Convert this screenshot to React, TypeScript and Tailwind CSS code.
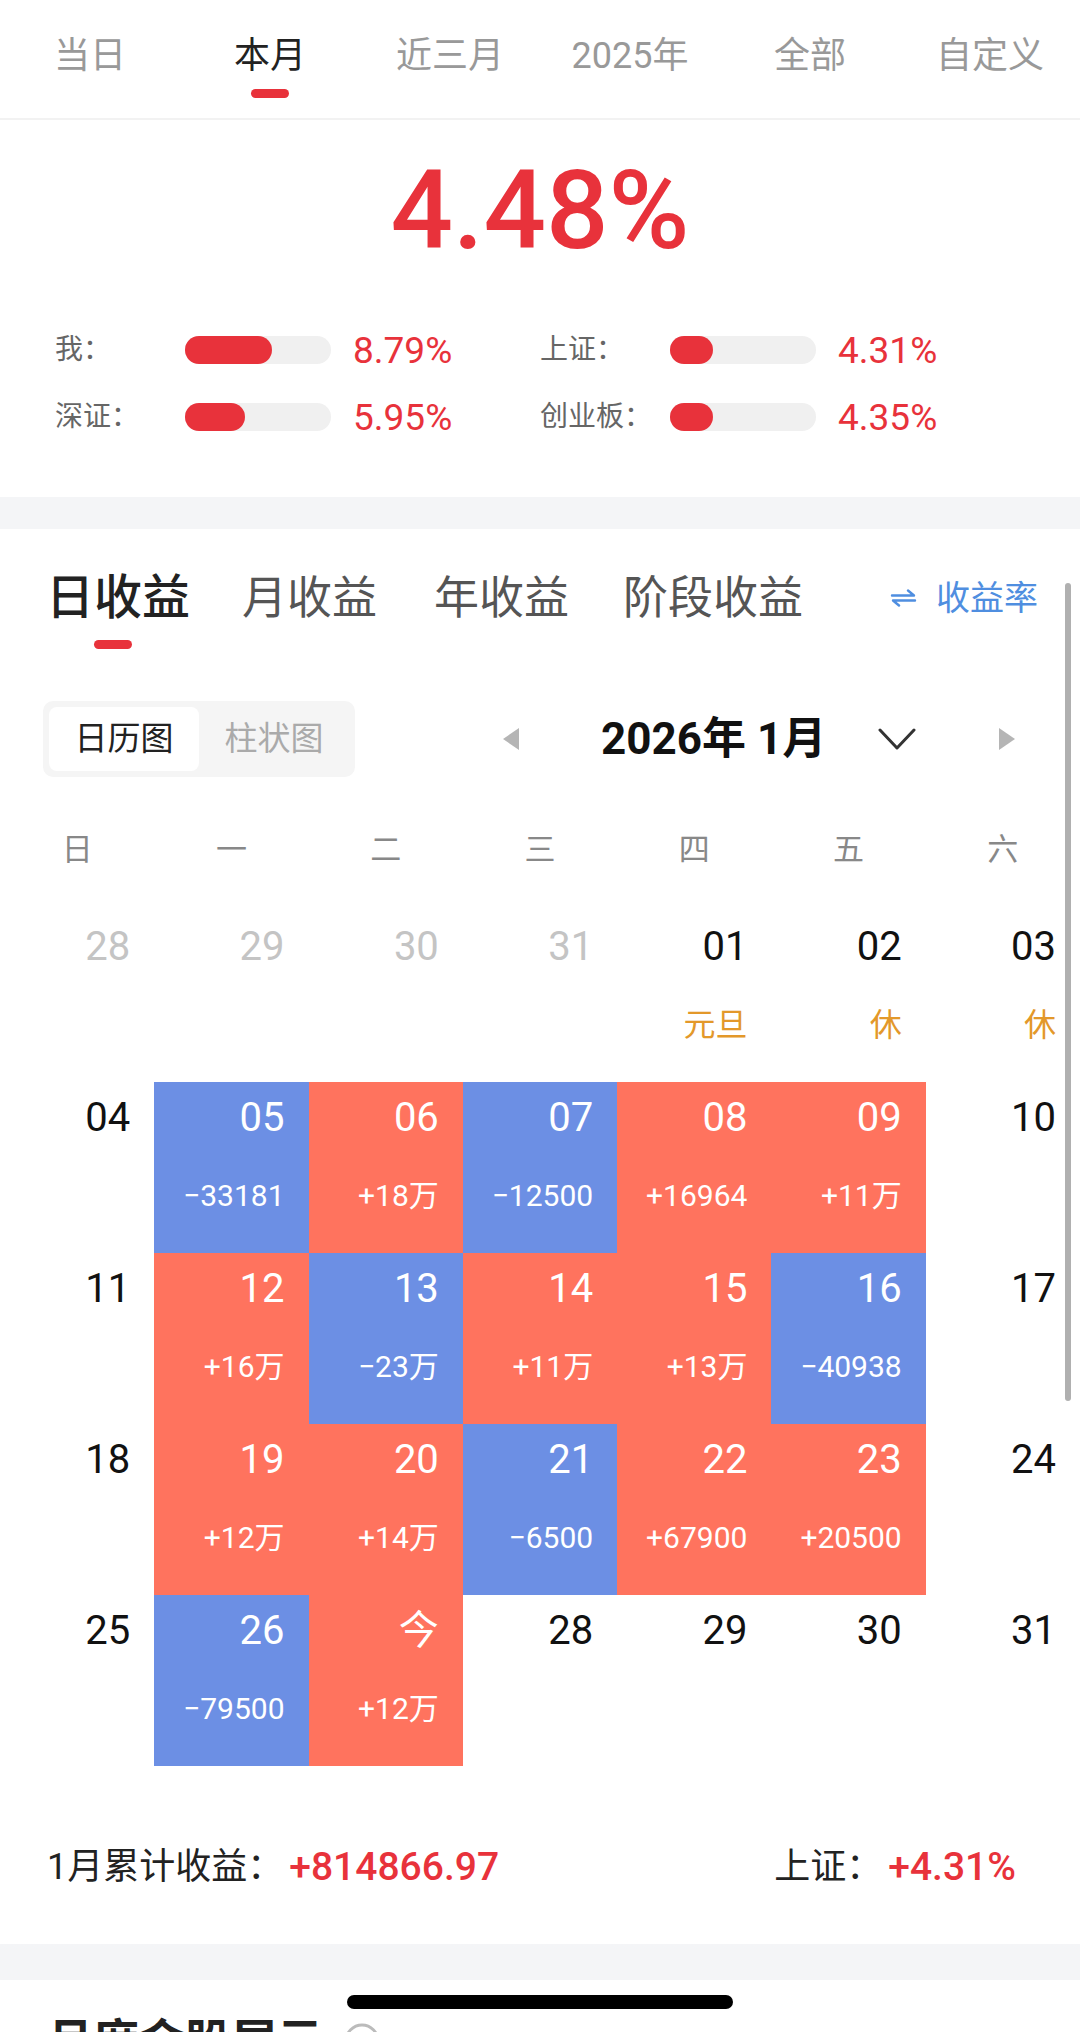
import React from "react";

const topTabs = ["当日", "本月", "近三月", "2025年", "全部", "自定义"];

const compare = [
  { label: "我：", fill: 87, value: "8.79%" },
  { label: "上证：", fill: 43, value: "4.31%" },
  { label: "深证：", fill: 60, value: "5.95%" },
  { label: "创业板：", fill: 43, value: "4.35%" },
];

type Cell = {
  d: string;
  tone?: "up" | "down";
  amt?: string;
  holiday?: string;
  prev?: boolean;
};

const weeks: Cell[][] = [
  [
    { d: "28", prev: true },
    { d: "29", prev: true },
    { d: "30", prev: true },
    { d: "31", prev: true },
    { d: "01", holiday: "元旦" },
    { d: "02", holiday: "休" },
    { d: "03", holiday: "休" },
  ],
  [
    { d: "04" },
    { d: "05", tone: "down", amt: "−33181" },
    { d: "06", tone: "up", amt: "+18万" },
    { d: "07", tone: "down", amt: "−12500" },
    { d: "08", tone: "up", amt: "+16964" },
    { d: "09", tone: "up", amt: "+11万" },
    { d: "10" },
  ],
  [
    { d: "11" },
    { d: "12", tone: "up", amt: "+16万" },
    { d: "13", tone: "down", amt: "−23万" },
    { d: "14", tone: "up", amt: "+11万" },
    { d: "15", tone: "up", amt: "+13万" },
    { d: "16", tone: "down", amt: "−40938" },
    { d: "17" },
  ],
  [
    { d: "18" },
    { d: "19", tone: "up", amt: "+12万" },
    { d: "20", tone: "up", amt: "+14万" },
    { d: "21", tone: "down", amt: "−6500" },
    { d: "22", tone: "up", amt: "+67900" },
    { d: "23", tone: "up", amt: "+20500" },
    { d: "24" },
  ],
  [
    { d: "25" },
    { d: "26", tone: "down", amt: "−79500" },
    { d: "今", tone: "up", amt: "+12万" },
    { d: "28" },
    { d: "29" },
    { d: "30" },
    { d: "31" },
  ],
];

function DayCell({ c }: { c: Cell }) {
  const bg = c.tone === "up" ? "bg-[#ff735e]" : c.tone === "down" ? "bg-[#6c8fe4]" : "";
  const numColor = c.tone ? "text-white" : c.prev ? "text-[#c4c4c4]" : "text-[#111]";
  return (
    <div className={`h-[171px] flex flex-col items-end pr-[24px] pt-[16px] ${bg}`}>
      <span className={`text-[40px] leading-none ${numColor}`}>{c.d}</span>
      {c.amt && <span className="mt-[43px] text-[30px] leading-none text-white">{c.amt}</span>}
      {c.holiday && <span className="mt-[42px] text-[32px] leading-none text-[#e3982a]">{c.holiday}</span>}
    </div>
  );
}

export default function App() {
  return (
    <div className="relative w-[1080px] h-[2032px] overflow-hidden bg-white font-['Roboto','Noto_Sans_CJK_SC',sans-serif]">
      {/* period tabs */}
      <div className="h-[120px] grid grid-cols-6 border-b-2 border-[#f2f2f2]">
        {topTabs.map((t, i) => (
          <div key={t} className="flex flex-col items-center pt-[38px]">
            <span className={`text-[36px] leading-none ${i === 1 ? "text-[#222]" : "text-[#999]"}`}>{t}</span>
            {i === 1 && <span className="mt-[15px] w-[38px] h-[9px] rounded-full bg-[#e8323b]" />}
          </div>
        ))}
      </div>

      {/* headline */}
      <div className="pt-[36px] pb-[60px]">
        <div className="text-center text-[110px] leading-none font-medium text-[#e8323b]">4.48%</div>
        <div className="mt-[64px] px-[55px] grid grid-cols-2 gap-y-[27px]">
          {compare.map((r) => (
            <div key={r.label} className="flex items-center h-[40px]">
              <span className="w-[130px] text-[28px] text-[#666] leading-none">{r.label}</span>
              <div className="relative w-[146px] h-[28px] rounded-full bg-[#f0f0f0]">
                <div className="absolute left-0 top-0 h-full rounded-full bg-[#e8323b]" style={{ width: r.fill }} />
              </div>
              <span className="ml-[22px] text-[37px] leading-none text-[#e8323b]">{r.value}</span>
            </div>
          ))}
        </div>
      </div>

      <div className="h-[32px] bg-[#f4f5f7]" />

      {/* income section */}
      <div className="pt-[45px]">
        <div className="flex items-center h-[48px] pl-[46px] pr-[42px]">
          <span className="text-[48px] leading-none text-[#222] font-medium">日收益</span>
          <span className="ml-[52px] text-[45px] leading-none text-[#555]">月收益</span>
          <span className="ml-[57px] text-[45px] leading-none text-[#555]">年收益</span>
          <span className="ml-[54px] text-[45px] leading-none text-[#555]">阶段收益</span>
          <div className="ml-auto flex items-center text-[#4f8ee0]">
            <svg width="27" height="18" viewBox="0 0 27 18" fill="none" stroke="#4f8ee0" strokeWidth="2.4" strokeLinecap="round" strokeLinejoin="round">
              <path d="M2 6.5H24L18 1.5" />
              <path d="M25 11.5H3L9 16.5" />
            </svg>
            <span className="ml-[19px] text-[34px] leading-none">收益率</span>
          </div>
        </div>
        <div className="ml-[94px] mt-[18px] w-[38px] h-[9px] rounded-full bg-[#e8323b]" />

        <div className="mt-[52px] flex items-center px-[43px] h-[76px]">
          <div className="flex p-[6px] rounded-[10px] bg-[#f5f5f5]">
            <div className="w-[150px] h-[64px] rounded-[8px] bg-white flex items-center justify-center text-[33px] text-[#222]">
              日历图
            </div>
            <div className="w-[150px] h-[64px] flex items-center justify-center text-[33px] text-[#aaa]">柱状图</div>
          </div>
          <svg className="ml-[148px]" width="16" height="22" viewBox="0 0 16 22">
            <polygon points="16,0 16,22 0,11" fill="#b5b5b5" />
          </svg>
          <span className="ml-[82px] w-[222px] text-[44px] leading-none font-bold text-[#111] whitespace-nowrap">
            2026年 1月
          </span>
          <svg className="ml-[55px]" width="38" height="22" viewBox="0 0 38 22" fill="none" stroke="#333" strokeWidth="3" strokeLinecap="round" strokeLinejoin="round">
            <polyline points="2,2 19,20 36,2" />
          </svg>
          <svg className="ml-[83px]" width="16" height="22" viewBox="0 0 16 22">
            <polygon points="0,0 0,22 16,11" fill="#b5b5b5" />
          </svg>
        </div>

        <div className="mt-[42px] grid grid-cols-7 h-[60px] items-center">
          {["日", "一", "二", "三", "四", "五", "六"].map((w) => (
            <span key={w} className="text-center text-[31px] leading-none text-[#888]">
              {w}
            </span>
          ))}
        </div>

        <div className="mt-[32px] grid grid-cols-7">
          {weeks.flat().map((c, i) => (
            <DayCell key={i} c={c} />
          ))}
        </div>

        <div className="mt-[79px] mb-[55px] flex items-center h-[44px] pl-[47px] pr-[64px]">
          <span className="text-[36px] leading-none text-[#222]">1月累计收益：</span>
          <span className="ml-[6px] text-[39px] leading-none font-medium text-[#e8323b]">+814866.97</span>
          <span className="ml-auto text-[36px] leading-none text-[#222]">上证：</span>
          <span className="ml-[6px] text-[39px] leading-none font-medium text-[#e8323b]">+4.31%</span>
        </div>
      </div>

      <div className="h-[36px] bg-[#f4f5f7]" />

      <div className="pt-[38px] pl-[47px] flex items-center">
        <span className="text-[46px] leading-none font-bold text-[#222]">月度金股展示</span>
        <svg className="ml-[20px]" width="38" height="38" viewBox="0 0 38 38" fill="none" stroke="#bbb" strokeWidth="3">
          <circle cx="19" cy="19" r="16" />
          <circle cx="19" cy="19" r="7" />
        </svg>
      </div>

      {/* overlays */}
      <div className="absolute left-[1065px] top-[583px] w-[6px] h-[818px] rounded-full bg-[#b0b0b0]" />
      <div className="absolute left-[347px] top-[1995px] w-[386px] h-[14px] rounded-full bg-black" />
    </div>
  );
}
